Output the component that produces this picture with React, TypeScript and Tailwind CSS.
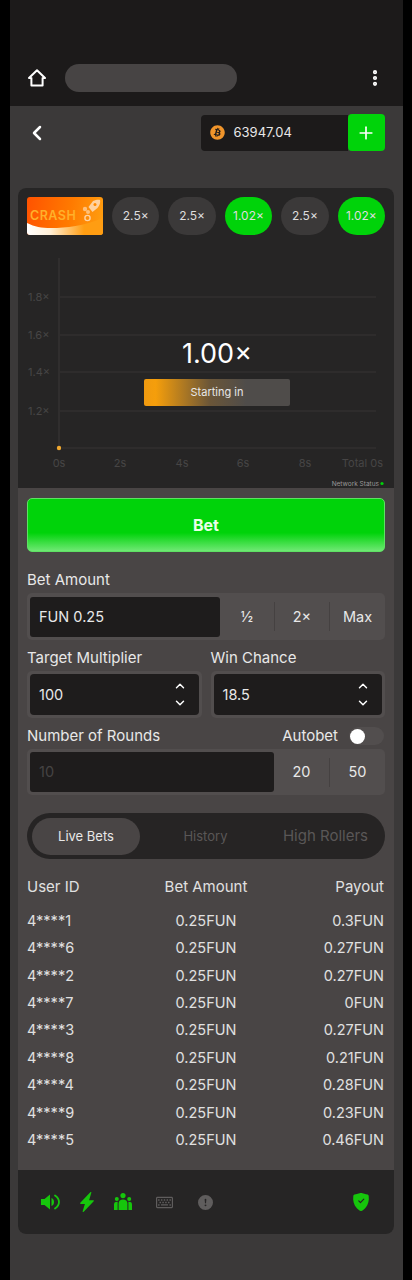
import { ChevronDown, ChevronLeft, ChevronUp, EllipsisVertical, Plus } from "lucide-react";
import { BsExclamationCircleFill, BsLightningChargeFill, BsShieldFillCheck } from "react-icons/bs";
import { FaBitcoin, FaRegKeyboard } from "react-icons/fa";

const history = [
  { value: "2.5×", win: false },
  { value: "2.5×", win: false },
  { value: "1.02×", win: true },
  { value: "2.5×", win: false },
  { value: "1.02×", win: true },
];

const bets = [
  ["4****1", "0.3FUN"],
  ["4****6", "0.27FUN"],
  ["4****2", "0.27FUN"],
  ["4****7", "0FUN"],
  ["4****3", "0.27FUN"],
  ["4****8", "0.21FUN"],
  ["4****4", "0.28FUN"],
  ["4****9", "0.23FUN"],
  ["4****5", "0.46FUN"],
];

function HomeIcon() {
  return (
    <svg viewBox="0 0 20 20" className="h-[20px] w-[20px]" fill="none" stroke="#fff" strokeWidth="2" strokeLinejoin="round">
      <path d="M10 2.2 L18 10 H15.6 V17.6 H4.4 V10 H2 Z" />
    </svg>
  );
}

function SpeakerIcon() {
  return (
    <svg viewBox="0 0 19 18" className="h-[18px] w-[19px]" fill="#16c60c">
      <path d="M0 6 H3.5 L9 1.5 V16.5 L3.5 12 H0 Z" />
      <path d="M10.5 5 C12.6 6 13 7.6 13 9 C13 10.4 12.6 12 10.5 13 Z" />
      <path d="M14 2.5 C17 4.5 18 6.8 18 9 C18 11.2 17 13.5 14 15.5" fill="none" stroke="#16c60c" strokeWidth="1.8" strokeLinecap="round" />
    </svg>
  );
}

function GroupIcon() {
  return (
    <svg viewBox="0 0 20 20" className="h-[20px] w-[20px]" fill="#16c60c">
      <circle cx="10" cy="3.6" r="2.6" />
      <circle cx="3.8" cy="7" r="2" />
      <circle cx="16.2" cy="7" r="2" />
      <path d="M5.6 18 V11.5 C5.6 9 7.6 7.6 10 7.6 C12.4 7.6 14.4 9 14.4 11.5 V18 Z" />
      <path d="M1 18 V12.5 C1 10.5 2.2 9.8 4.6 9.8 V18 Z" />
      <path d="M19 18 V12.5 C19 10.5 17.8 9.8 15.4 9.8 V18 Z" />
    </svg>
  );
}

function CrashLogo() {
  return (
    <div className="relative h-[38px] w-[76px] shrink-0 overflow-hidden rounded-[3px] bg-[linear-gradient(100deg,#ff5200,#ff7a00_55%,#ffa010)]">
      <svg viewBox="0 0 76 38" className="absolute inset-0 h-full w-full">
        <defs>
          <linearGradient id="wave" x1="0" x2="1" y1="0" y2="0">
            <stop offset="0" stopColor="#ffffff" />
            <stop offset="0.3" stopColor="#fff0d8" />
            <stop offset="0.75" stopColor="#ff9d12" />
          </linearGradient>
        </defs>
        <path d="M0 26 C8 30 14 31 24 31 C40 31 56 29 76 21 L76 38 L0 38 Z" fill="url(#wave)" />
        {/* rocket */}
        <g fill="#ffd2a0">
          <path d="M66 4 C69 2.5 72 2.5 73 3 C73.5 5 73 8 70.5 11 L65.5 15 L61.5 10 Z" />
          <circle cx="60.5" cy="21" r="2.6" fill="none" stroke="#ffd2a0" strokeWidth="1.4" />
          <circle cx="58" cy="12" r="2.2" opacity="0.75" />
          <circle cx="61" cy="15" r="2" opacity="0.75" />
        </g>
        <circle cx="68" cy="7.5" r="1.5" fill="#ff8a00" />
      </svg>
      <span className="absolute left-[3px] top-[12px] text-[12.5px] font-semibold leading-[14px] tracking-[0.5px] text-[#ffb02a]">CRASH</span>
    </div>
  );
}

function Chart() {
  const grid = [62, 100, 137, 176];
  const yLabels = ["1.8×", "1.6×", "1.4×", "1.2×"];
  const xLabels: [number, string][] = [
    [41, "0s"],
    [102, "2s"],
    [164, "4s"],
    [225, "6s"],
    [287, "8s"],
  ];
  return (
    <div className="relative h-[253px]">
      <svg viewBox="0 0 376 253" className="block h-[253px] w-[376px]" fontFamily="Inter, sans-serif">
        <line x1="41" x2="41" y1="23" y2="213" stroke="#3a3838" strokeWidth="1" />
        {grid.map((y) => (
          <line key={y} x1="42" x2="358" y1={y} y2={y} stroke="#363434" strokeWidth="1" />
        ))}
        <line x1="44" x2="358" y1="213" y2="213" stroke="#363434" strokeWidth="1" />
        {grid.map((y, i) => (
          <text key={y} x="10" y={y + 4} fontSize="11" fill="#474545">
            {yLabels[i]}
          </text>
        ))}
        {xLabels.map(([x, label]) => (
          <text key={label} x={x} y="232" fontSize="11" fill="#474545" textAnchor="middle">
            {label}
          </text>
        ))}
        <text x="365" y="232" fontSize="11" fill="#474545" textAnchor="end">
          Total 0s
        </text>
        <circle cx="41" cy="213" r="2.2" fill="#f0a830" />
        <text x="361" y="251" fontSize="6.5" fill="#9a9898" textAnchor="end">
          Network Status
        </text>
        <circle cx="364" cy="248.5" r="1.6" fill="#00d30a" />
      </svg>
      <div className="absolute left-[126px] top-[104px] flex w-[146px] flex-col items-center">
        <div className="text-[27px] font-normal leading-[30px] text-white">1.00×</div>
        <div className="mt-[10px] flex h-[27px] w-full items-center justify-center rounded-[2px] bg-[linear-gradient(90deg,#f09a10,#f59e0b_8%,#6b5638_45%,#4f4c4a_70%,#4f4c4a)] text-[11px] text-[#e8e8e8]">
          Starting in
        </div>
      </div>
    </div>
  );
}

function StepInput({ value }: { value: string }) {
  return (
    <div className="flex-1 rounded-[5px] bg-[#524e4e] p-[3px]">
      <div className="flex h-[41px] items-center justify-between rounded-[4px] bg-[#1e1c1c] pl-[9px] pr-[12px] text-[14.5px] text-[#e8e8e8]">
        <span>{value}</span>
        <div className="flex flex-col gap-[3px] text-white">
          <ChevronUp size={14} strokeWidth={2.5} />
          <ChevronDown size={14} strokeWidth={2.5} />
        </div>
      </div>
    </div>
  );
}

function Divider() {
  return <div className="h-[29px] w-px bg-[#454141]" />;
}

export default function App() {
  return (
    <div className="min-h-[1280px] bg-black font-['Inter',sans-serif]">
      <div className="mx-auto h-[1280px] w-[393px] bg-[#3b3939]">
        {/* browser bar */}
        <div className="flex h-[106px] items-end justify-between bg-[#1c1a1a] pb-[14px] pl-[17px] pr-[18px]">
          <div className="flex items-center">
            <HomeIcon />
            <div className="ml-[18px] h-[28px] w-[172px] rounded-full bg-[#474444]" />
          </div>
          <EllipsisVertical size={20} strokeWidth={3} className="mb-1 text-white" />
        </div>

        {/* wallet row */}
        <div className="flex h-[53px] items-center justify-between pl-[15px] pr-[18px]">
          <ChevronLeft size={24} strokeWidth={2.5} className="text-white" />
          <div className="flex h-[36px] items-center">
            <div className="flex h-[36px] w-[147px] items-center rounded-l-[4px] bg-[#1c1a1a] pl-[9px]">
              <FaBitcoin size={15} className="text-[#f0952b]" />
              <span className="ml-[9px] text-[13px] text-[#e8e8e8]">63947.04</span>
            </div>
            <div className="flex h-[37px] w-[37px] items-center justify-center rounded-[4px] bg-[#00d30a]">
              <Plus size={20} className="text-white" />
            </div>
          </div>
        </div>

        {/* game card */}
        <div className="ml-[8.5px] mt-[29px] w-[376px] overflow-hidden rounded-[8px] bg-[#494545]">
          <div className="bg-[#262525]">
            <div className="flex gap-[9px] pl-[9px] pr-[9px] pt-[9px]">
              <CrashLogo />
              {history.map((item, i) => (
                <div
                  key={i}
                  className={`flex h-[38px] flex-1 items-center justify-center rounded-full text-[12px] text-[#dedede] ${
                    item.win ? "bg-[#00d30a]" : "bg-[#3b3939]"
                  }`}
                >
                  {item.value}
                </div>
              ))}
            </div>
            <Chart />
          </div>

          <div className="px-[9px] pt-[10px]">
            <button className="flex h-[54px] w-full items-center justify-center rounded-[5px] border border-[#5fe064] bg-[linear-gradient(180deg,#00d30a_0%,#00d30a_65%,#6fe874_100%)] text-[16px] font-bold text-[#e9ffe9]">
              Bet
            </button>

            <div className="mt-[19px] text-[15px] leading-[18px] text-[#e8e8e8]">Bet Amount</div>
            <div className="mt-[4px] flex h-[47px] items-center rounded-[5px] bg-[#524e4e] pl-[3px] text-[14.5px] text-[#e8e8e8]">
              <div className="flex h-[40px] w-[190px] items-center rounded-[3px] bg-[#1e1c1c] pl-[9px]">FUN 0.25</div>
              <div className="w-[54px] text-center">½</div>
              <Divider />
              <div className="w-[54px] text-center">2×</div>
              <Divider />
              <div className="flex-1 text-center">Max</div>
            </div>

            <div className="mt-[9px] flex gap-[9px] text-[15px] leading-[18px] text-[#e8e8e8]">
              <div className="flex-1">Target Multiplier</div>
              <div className="flex-1">Win Chance</div>
            </div>
            <div className="mt-[4px] flex gap-[9px]">
              <StepInput value="100" />
              <StepInput value="18.5" />
            </div>

            <div className="mt-[9px] flex h-[18px] items-center justify-between text-[15px] text-[#e8e8e8]">
              <span>Number of Rounds</span>
              <div className="flex items-center">
                <span>Autobet</span>
                <div className="ml-[11px] mr-[1px] flex h-[18px] w-[35px] items-center rounded-full bg-[#524e4e] pl-[1px]">
                  <div className="h-[15px] w-[15px] rounded-full bg-white" />
                </div>
              </div>
            </div>
            <div className="mt-[4px] flex h-[46px] items-center rounded-[5px] bg-[#524e4e] pl-[3px] text-[14.5px] text-[#e8e8e8]">
              <div className="flex h-[40px] w-[244px] items-center rounded-[3px] bg-[#1e1c1c] pl-[9px] text-[#454343]">10</div>
              <div className="w-[55px] text-center">20</div>
              <Divider />
              <div className="flex-1 text-center">50</div>
            </div>

            <div className="mt-[18px] flex h-[46px] items-center rounded-full bg-[#262424] pl-[5px] pr-[17px]">
              <div className="flex h-[37px] w-[108px] items-center justify-center rounded-full bg-[#494545] pt-[1px] text-[13px] text-[#e8e8e8]">
                Live Bets
              </div>
              <div className="flex-1 pr-[12px] pt-[1px] text-center text-[13px] text-[#5a5757]">History</div>
              <div className="pt-[1px] text-[15px] text-[#5a5757]">High Rollers</div>
            </div>

            <div className="mt-[18px] grid grid-cols-3 text-[15px] leading-[20px] text-[#e0e0e0]">
              <div>User ID</div>
              <div className="whitespace-nowrap text-center">Bet Amount</div>
              <div className="pr-[1px] text-right">Payout</div>
            </div>
            <div className="mt-[10px] h-[263px]">
              {bets.map(([user, payout]) => (
                <div key={user} className="grid h-[27.4px] grid-cols-3 items-center text-[14.5px] text-[#e0e0e0]">
                  <div>{user}</div>
                  <div className="text-center">0.25FUN</div>
                  <div className="pr-[1px] text-right">{payout}</div>
                </div>
              ))}
            </div>
          </div>

          <div className="flex h-[64px] items-center bg-[#262525] pl-[23px] pr-[24px]">
            <SpeakerIcon />
            <BsLightningChargeFill size={20} className="ml-[17px] text-[#16c60c]" />
            <div className="ml-[16px]">
              <GroupIcon />
            </div>
            <FaRegKeyboard size={17} className="ml-[23px] text-[#5f5d5d]" />
            <BsExclamationCircleFill size={15} className="ml-[25px] text-[#5f5d5d]" />
            <BsShieldFillCheck size={18} className="ml-auto text-[#16c60c]" />
          </div>
        </div>
      </div>
    </div>
  );
}
